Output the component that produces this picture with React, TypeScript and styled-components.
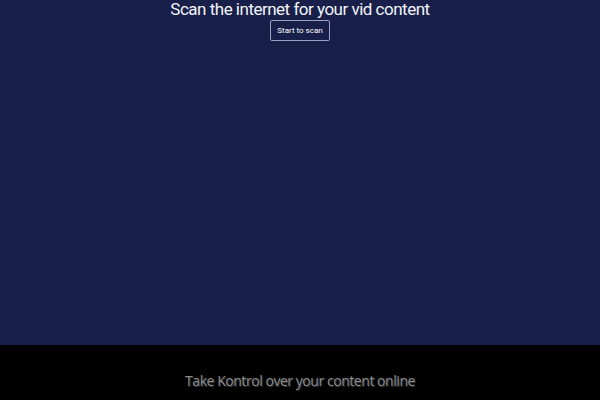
import React from "react";
import styled, { createGlobalStyle } from "styled-components";

const GlobalStyle = createGlobalStyle`
  html, body {
    margin: 0;
    padding: 0;
    background: #000;
  }
  * {
    box-sizing: border-box;
  }
`;

const Page = styled.div`
  width: 100%;
  display: flex;
  flex-direction: column;
`;

const Hero = styled.section`
  height: 345px;
  background: #182049;
  display: flex;
  flex-direction: column;
  align-items: center;
  .title {
    margin: 0;
    font-family: Roboto, "Liberation Sans", sans-serif;
    font-weight: 400;
    font-size: 17px;
    line-height: 19px;
    color: #f2f3f8;
    letter-spacing: -0.5px;
  }
`;

const ScanButton = styled.button`
  margin-top: 1px;
  width: 60px;
  height: 21px;
  padding: 0;
  background: transparent;
  border: 1px solid #9aa0bd;
  border-radius: 2px;
  color: #ffffff;
  font-family: Roboto, "Liberation Sans", sans-serif;
  font-weight: 400;
  font-size: 8px;
  cursor: pointer;
`;

const Footer = styled.footer`
  height: 55px;
  background: #000;
  display: flex;
  justify-content: center;
  padding-top: 27px;
  span {
    font-family: "Open Sans", "Liberation Sans", sans-serif;
    font-size: 14px;
    line-height: 18px;
    color: #8c8c8c;
    text-shadow: 1px 1px 1px #3a3a3a;
    letter-spacing: -0.45px;
  }
`;

export default function App() {
  return (
    <Page>
      <GlobalStyle />
      <Hero>
        <h1 className="title">Scan the internet for your vid content</h1>
        <ScanButton>Start to scan</ScanButton>
      </Hero>
      <Footer>
        <span>Take Kontrol over your content online</span>
      </Footer>
    </Page>
  );
}
